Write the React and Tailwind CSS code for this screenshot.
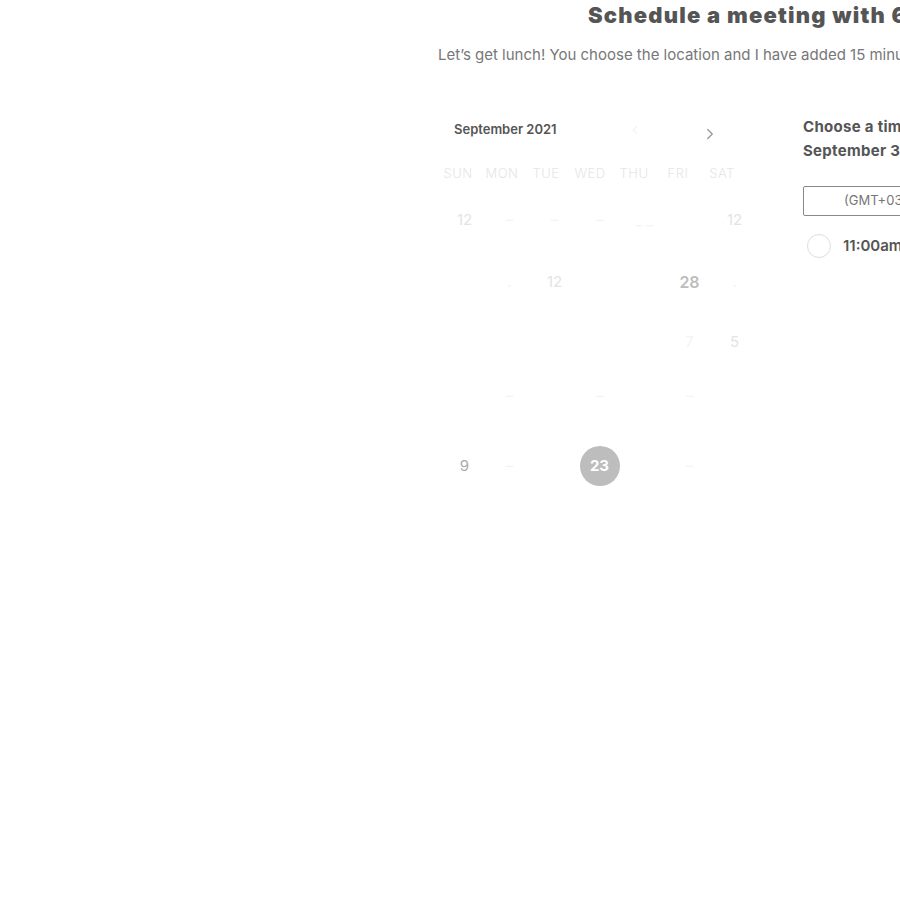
import React from "react";
import { ChevronLeft, ChevronRight } from "lucide-react";

const days = ["SUN", "MON", "TUE", "WED", "THU", "FRI", "SAT"];

// weeks of the month, as caught mid-fade: most cells barely visible
const weeks = [
  { h: "h-[62px]", cells: [["12", "faint"], ["–", "ghost"], ["–", "ghost"], ["–", "ghost"], ["_ _", "ghost"], ["", ""], ["12", "faint"]] },
  { h: "h-[60px]", cells: [["", ""], [".", "ghost"], ["12", "faint"], ["", ""], ["", ""], ["28", "bold"], [".", "ghost"]] },
  { h: "h-[54px]", cells: [["", ""], ["", ""], ["", ""], ["", ""], ["", ""], ["7", "ghost"], ["5", "faint"]] },
  { h: "h-[70px]", cells: [["", ""], ["–", "ghost"], ["", ""], ["–", "ghost"], ["", ""], ["–", "ghost"], ["", ""]] },
  { h: "h-[40px]", cells: [["9", "mid"], ["–", "ghost"], ["", ""], ["23", "selected"], ["", ""], ["–", "ghost"], ["", ""]] },
];

const cellClass = {
  ghost: "text-[#f3f3f3] text-[15px]",
  faint: "text-[#e4e4e4] text-[15px]",
  mid: "text-[#aaaaaa] text-[15px]",
  bold: "text-[#bdbdbd] text-[16px] font-semibold",
  "": "",
};

const DayCell = ({ label, kind }) => {
  if (kind === "selected") {
    return (
      <div className="w-[45px] h-[40px] flex items-center justify-center">
        <span className="h-[40px] w-[40px] rounded-full bg-[#bdbdbd] text-white text-[15px] font-bold flex items-center justify-center">
          {label}
        </span>
      </div>
    );
  }
  return (
    <div className={`w-[45px] h-[40px] flex items-center justify-center ${cellClass[kind]}`}>{label}</div>
  );
};

export default function App() {
  return (
    <div
      className="w-full h-[900px] overflow-hidden bg-white"
      style={{ fontFamily: "Inter, 'Noto Sans', sans-serif" }}
    >
      <div className="pl-[438px] pt-[1px] w-[1400px]">
        <h1 className="ml-[150px] text-[22px] leading-[28px] font-black tracking-[1.2px] text-[#555555] whitespace-nowrap">
          Schedule a meeting with 6ixth Street
        </h1>
        <p className="mt-[16px] text-[15px] leading-[20px] text-[#777777] whitespace-nowrap">
          Let’s get lunch! You choose the location and I have added 15 minutes of travel time.
        </p>

        <div className="flex mt-[53px]">
          {/* Calendar */}
          <div className="w-[320px] ml-[4px]">
            <div className="flex items-center h-[24px] pl-[12px]">
              <span className="text-[13px] font-semibold text-[#555555] w-[170px]">September 2021</span>
              <ChevronLeft size={14} strokeWidth={1.5} className="text-[#e6e6e6] ml-[4px]" />
              <ChevronRight size={18} strokeWidth={1.8} className="text-[#9a9a9a] ml-[59px] mt-[7px]" />
            </div>
            <div className="flex mt-[22px] -ml-[6px] h-[20px] items-center text-[13px] tracking-[0.5px] text-[#e6e6e6] font-light">
              {days.map((d) => (
                <div key={d} className="w-[44px] flex justify-center">{d}</div>
              ))}
            </div>
            <div className="mt-[16px]">
              {weeks.map((w, i) => (
                <div key={i} className={`flex items-start ${w.h}`}>
                  {w.cells.map(([label, kind], j) => (
                    <DayCell key={j} label={label} kind={kind} />
                  ))}
                </div>
              ))}
            </div>
          </div>

          {/* Time slots */}
          <div className="ml-[41px] -mt-[3px]">
            <div className="text-[15px] leading-[24px] font-bold tracking-[0.3px] text-[#555555] whitespace-nowrap">
              <div>Choose a time</div>
              <div>September 3, 2021</div>
            </div>
            <div className="mt-[23px] w-[260px] h-[30px] border border-[#888888] rounded-[2px] flex items-center pl-[40px] text-[13px] text-[#777777]">
              (GMT+03:00) East Africa Time
            </div>
            <div className="flex items-center mt-[18px] pl-[4px]">
              <span className="h-[24px] w-[24px] rounded-full border border-[#dddddd]"></span>
              <span className="ml-[12px] text-[15px] font-semibold text-[#555555]">11:00am</span>
            </div>
          </div>
        </div>
      </div>
    </div>
  );
}
